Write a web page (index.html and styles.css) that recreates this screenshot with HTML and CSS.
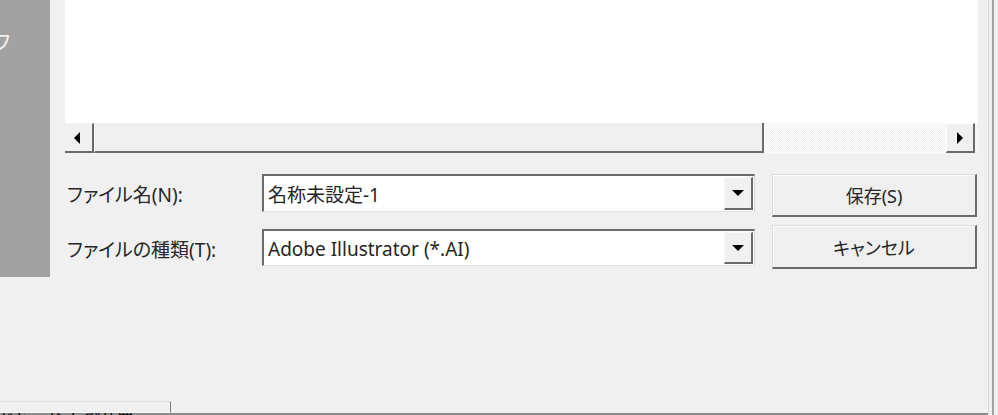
FILE: index.html
```html
<!DOCTYPE html>
<html lang="ja">
<head>
<meta charset="utf-8">
<title>保存ダイアログ</title>
<link rel="stylesheet" href="styles.css">
</head>
<body>
<div class="win">
  <div class="left-col">
    <div class="upper">
      <div class="sidebar"><span class="side-glyph">フ</span></div>
      <div class="right">
        <div class="list"></div>
        <div class="hscroll">
          <div class="sb-btn sb-left"><span class="tri-left"></span></div>
          <div class="sb-thumb"></div>
          <div class="sb-track"></div>
          <div class="sb-btn sb-right"><span class="tri-right"></span></div>
          <div class="sb-fill"></div>
        </div>
        <div class="form">
          <div class="label row1">ファイル名(N):</div>
          <div class="combo row1 c1">
            <div class="combo-text">名称未設定-1</div>
            <div class="dd-btn"><span class="tri-down"></span></div>
          </div>
          <div class="btn row1 b1">保存(S)</div>
          <div class="label row2">ファイルの種類(T):</div>
          <div class="combo row2 c2">
            <div class="combo-text">Adobe Illustrator (*.AI)</div>
            <div class="dd-btn"><span class="tri-down"></span></div>
          </div>
          <div class="btn row2 b2">キャンセル</div>
        </div>
      </div>
    </div>
    <div class="spacer"></div>
    <div class="tabbar">
      <div class="tab"></div>
      <div class="peek"><span class="peek-text">ドキュメント 縦位置</span></div>
    </div>
  </div>
  <div class="vline"></div>
</div>
</body>
</html>
```

FILE: styles.css
```css
html, body {
  margin: 0;
  padding: 0;
  background: #f0f0f0;
}

.win {
  display: flex;
  width: 998px;
  height: 415px;
  overflow: hidden;
  background: #f0f0f0;
  font-family: "Noto Sans", "Noto Sans CJK JP", sans-serif;
  font-feature-settings: "palt";
  color: #262626;
}

.left-col {
  width: 988px;
  display: flex;
  flex-direction: column;
}

.upper {
  display: flex;
  align-items: flex-start;
}

.sidebar {
  width: 50px;
  height: 277px;
  background: #a2a2a2;
  overflow: hidden;
  flex: none;
}

.side-glyph {
  display: block;
  margin-top: 25px;
  margin-left: -8px;
  font-size: 22px;
  line-height: 30px;
  color: #f2f2f2;
  font-family: "Noto Sans CJK JP", sans-serif;
}

.right {
  margin-left: 15px;
  width: 913px;
  display: flex;
  flex-direction: column;
}

.list {
  height: 123px;
  background: #ffffff;
}

.hscroll {
  height: 30px;
  display: flex;
  background: #f0f0f0;
}

.sb-btn {
  box-sizing: border-box;
  height: 30px;
  background: #f0f0f0;
  border-right: 2px solid #6a6a6a;
  border-bottom: 2px solid #6a6a6a;
  display: flex;
  align-items: center;
  justify-content: center;
}

.sb-left {
  width: 29px;
  border-top: 1px solid #f4f4f4;
}

.sb-right {
  width: 29px;
  border-top: 1px solid #fbfbfb;
  border-left: 1px solid #fbfbfb;
}

.sb-thumb {
  box-sizing: border-box;
  width: 670px;
  height: 30px;
  background: #efefef;
  border-left: 1px solid #fafafa;
  border-right: 2px solid #6a6a6a;
  border-bottom: 2px solid #6a6a6a;
}

.sb-track {
  flex: 1;
  height: 31px;
  background: repeating-conic-gradient(#ffffff 0 25%, #f0f0f0 0 50%) 0 0 / 2px 2px;
}

.sb-fill {
  width: 3px;
  background: #f6f6f6;
}

.tri-left {
  width: 0;
  height: 0;
  border-top: 6px solid transparent;
  border-bottom: 6px solid transparent;
  border-right: 6px solid #000;
  margin-left: -4px;
}

.tri-right {
  width: 0;
  height: 0;
  border-top: 6px solid transparent;
  border-bottom: 6px solid transparent;
  border-left: 6px solid #000;
}

.form {
  display: grid;
  grid-template-columns: 197px 493px 222px;
  grid-template-rows: 51px 52px;
  padding-top: 20px;
}

.row1 { grid-row: 1; }
.row2 { grid-row: 2; }

.label {
  grid-column: 1;
  padding-left: 2px;
  padding-top: 2px;
  box-sizing: border-box;
  font-size: 19px;
  display: flex;
  align-items: center;
  white-space: nowrap;
}

.label.row1 { height: 38px; margin-top: 1px; }
.label.row2 { height: 37px; margin-top: 5px; }

.combo {
  grid-column: 2;
  box-sizing: border-box;
  display: flex;
  align-items: stretch;
  background: #ffffff;
  border-top: 2px solid #6c6c6c;
  border-left: 2px solid #6c6c6c;
  border-right: 1px solid #d6d6d6;
  border-bottom: 1px solid #e2e2e2;
}

.c1 { height: 38px; margin-top: 1px; }
.c2 { height: 37px; margin-top: 5px; }

.combo-text {
  flex: 1;
  display: flex;
  align-items: center;
  padding-left: 4px;
  padding-top: 1px;
  font-size: 19px;
  white-space: nowrap;
}

.dd-btn {
  box-sizing: border-box;
  width: 29px;
  margin: 1px 1px 1px 0;
  background: #f0f0f0;
  border-top: 1px solid #fafafa;
  border-left: 1px solid #fafafa;
  border-right: 2px solid #6a6a6a;
  border-bottom: 2px solid #6a6a6a;
  display: flex;
  align-items: center;
  justify-content: center;
}

.tri-down {
  width: 0;
  height: 0;
  border-left: 6px solid transparent;
  border-right: 6px solid transparent;
  border-top: 6px solid #000;
}

.btn {
  grid-column: 3;
  justify-self: end;
  box-sizing: border-box;
  width: 205px;
  height: 43px;
  margin-top: 1px;
  background: #efefef;
  border-top: 1px solid #dcdcdc;
  border-left: 1px solid #dcdcdc;
  border-right: 2px solid #6a6a6a;
  border-bottom: 2px solid #6a6a6a;
  box-shadow: inset 1px 1px 0 #fcfcfc;
  display: flex;
  align-items: center;
  justify-content: center;
  font-size: 18px;
}

.b2 { height: 44px; margin-top: 1px; }

.spacer {
  flex: 1;
}

.tabbar {
  height: 15px;
  display: flex;
  flex-direction: column;
}

.tab {
  box-sizing: border-box;
  width: 171px;
  height: 12px;
  border-top: 1px dotted #d2d2d2;
  border-bottom: 1px solid #fafafa;
  border-right: 1px solid #7a7a7a;
  margin-top: 1px;
}

.peek {
  height: 2px;
  overflow: hidden;
  background: #8a8a8a;
}

.peek-text {
  display: block;
  font-family: "Noto Sans CJK JP", sans-serif;
  font-size: 16px;
  line-height: 12px;
  color: #000;
  margin-top: -1px;
}

.vline {
  width: 10px;
  box-sizing: border-box;
  border-left: 1px solid #d9d9d9;
  box-shadow: inset 3px 0 0 #f0f0f0, inset 5px 0 0 #a2a2a2;
  background: #f0f0f0;
}
```
